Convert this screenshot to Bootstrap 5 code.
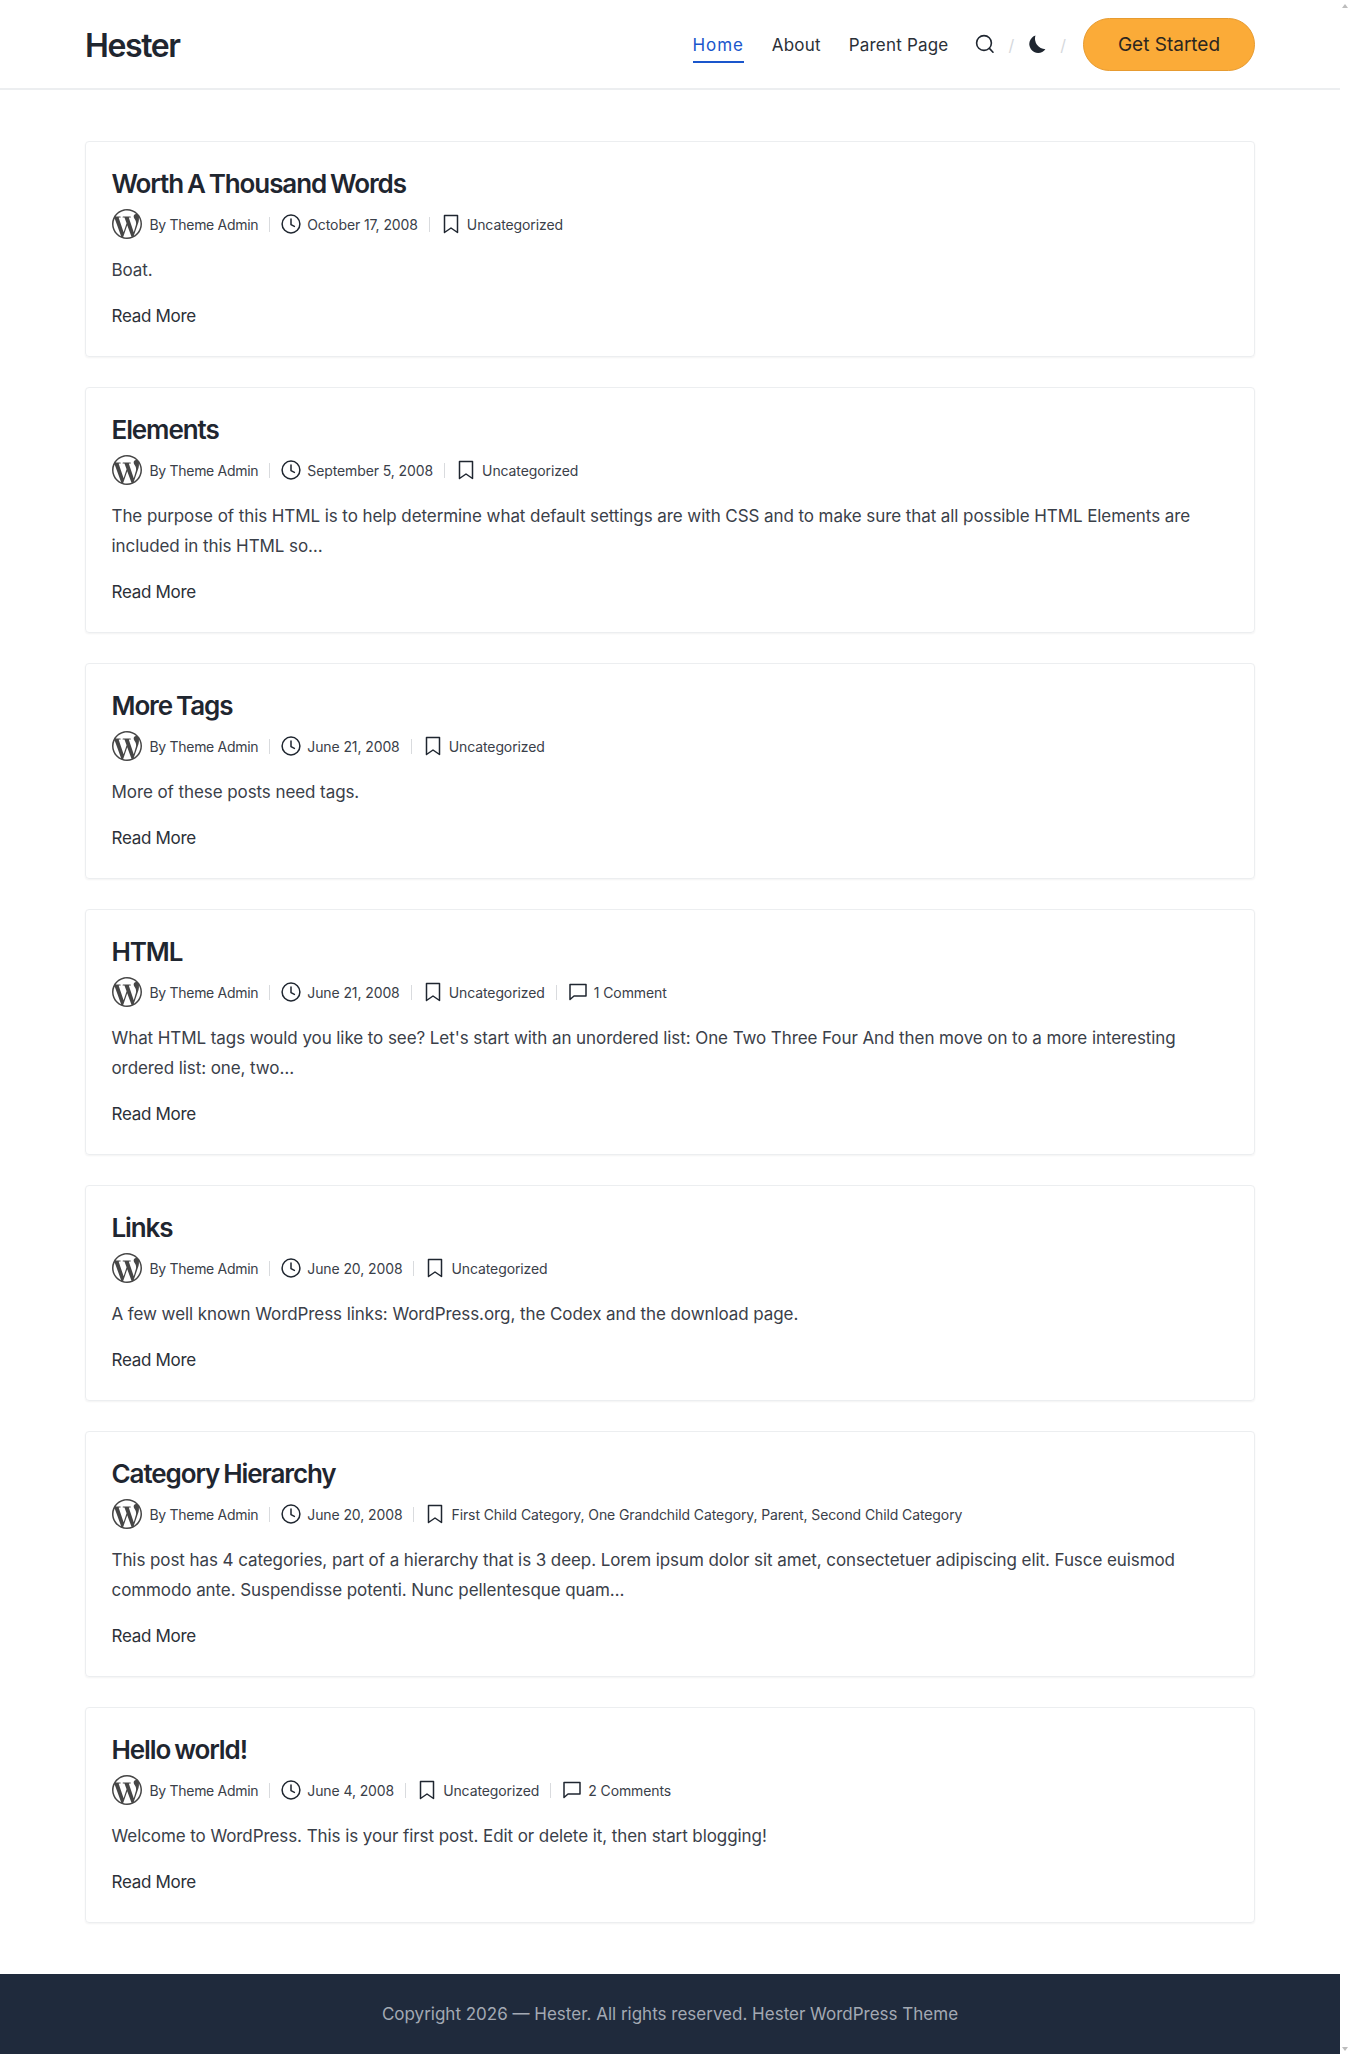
<!DOCTYPE html>
<html lang="en">
<head>
  <meta charset="UTF-8">
  <title>Hester</title>
  <meta name="viewport" content="width=device-width, initial-scale=1">
  <link href="https://cdn.jsdelivr.net/npm/bootstrap@5.3.3/dist/css/bootstrap.min.css" rel="stylesheet">
  <style>
    body { margin-right: 10px; font-family: Inter, "Liberation Sans", sans-serif; font-size: 16px; color: #3a4049; background: #fff; }
    .site-head { height: 90px; padding: 0 85px; border-bottom: 2px solid #eceef0; }
    .site-logo { font-size: 32px; font-weight: 600; letter-spacing: -1.4px; color: #1f2630; text-decoration: none; margin-top: 3px; }
    .head-link { font-size: 17px; letter-spacing: .2px; color: #2b3038; text-decoration: none; padding: 4px 0 3px; border-bottom: 2px solid transparent; margin-top: 4px; }
    .head-link.is-on { color: #1a56cc; border-bottom-color: #1a56cc; letter-spacing: .9px; }
    .head-nav { gap: 28px; }
    .head-tools { gap: 13px; margin-left: 27px; margin-right: 17px; color: #d5d8dc; }
    .head-tools span { margin-top: 1px; }
    .start-btn { width: 172px; height: 53px; padding-top: 2px; font-size: 19px; color: #2b2620; background: #fbab38; border: 1px solid #e79b30; border-radius: 27px; display: flex; align-items: center; justify-content: center; text-decoration: none; }
    .post-list { padding: 51px 85px 51px; gap: 30px; }
    .post-box { padding: 25px 26px 25px 25.5px; border: 1px solid #eceef0; border-radius: 4px; box-shadow: 0 1px 2px rgba(0,0,0,.05); }
    .post-title { font-size: 26px; font-weight: 600; line-height: 30px; letter-spacing: -1.1px; word-spacing: -1.5px; color: #1f2630; margin: 2px 0 10px; }
    .post-meta { font-size: 14px; letter-spacing: -.1px; height: 30px; color: #3a4049; }
    .meta-bit { display: flex; align-items: center; }
    .meta-bit + .meta-bit::before { content: ""; width: 1px; height: 15px; background: #d9dbde; margin: 0 11px; }
    .meta-bit svg { margin-right: 6px; flex: none; }
    .meta-bit .wp-mark { margin-right: 8px; }
    .meta-by { letter-spacing: -.3px; }
    .post-text { font-size: 17px; line-height: 30px; margin: 16px 0 16px; letter-spacing: -.08px; }
    .read-link { display: block; font-size: 17px; line-height: 30px; color: #2b3038; text-decoration: none; letter-spacing: -.3px; }
    .site-foot { height: 81px; background: #1f2a3c; color: #a3a9b3; font-size: 17px; }
    .bar-arrow { right: 2px; width: 0; height: 0; border-left: 3px solid transparent; border-right: 3px solid transparent; }
    .bar-up { top: 4px; border-bottom: 4px solid #bdbdbd; }
    .bar-down { bottom: 3px; border-top: 4px solid #bdbdbd; }
  </style>
</head>
<body>
  <svg width="0" height="0" class="position-absolute">
    <symbol id="i-wp" viewBox="0 0 24 24"><path fill="#464646" d="M21.469 6.825c.84 1.537 1.318 3.3 1.318 5.175 0 3.979-2.156 7.456-5.363 9.325l3.295-9.527c.615-1.54.82-2.771.82-3.864 0-.405-.026-.78-.07-1.11m-7.981.105c.647-.03 1.232-.105 1.232-.105.582-.075.514-.93-.067-.899 0 0-1.755.135-2.88.135-1.064 0-2.85-.15-2.85-.15-.585-.03-.661.855-.075.885 0 0 .54.061 1.125.09l1.68 4.605-2.37 7.08L5.354 6.9c.649-.03 1.234-.1 1.234-.1.585-.075.516-.93-.065-.896 0 0-1.746.138-2.874.138-.2 0-.438-.008-.69-.015C4.911 3.15 8.235 1.215 12 1.215c2.809 0 5.365 1.072 7.286 2.833-.046-.003-.091-.009-.141-.009-1.06 0-1.812.923-1.812 1.914 0 .89.513 1.643 1.06 2.531.411.72.89 1.643.89 2.977 0 .915-.354 1.994-.821 3.479l-1.075 3.585-3.9-11.61.001.014zM12 22.784c-1.059 0-2.081-.153-3.048-.437l3.237-9.406 3.315 9.087c.024.053.05.101.078.149-1.12.393-2.325.609-3.582.609M1.211 12c0-1.564.336-3.05.935-4.39L7.29 21.709C3.694 19.96 1.212 16.271 1.211 12M12 0C5.385 0 0 5.385 0 12s5.385 12 12 12 12-5.385 12-12S18.615 0 12 0"/></symbol>
    <symbol id="i-clock" viewBox="0 0 20 20"><g fill="none" stroke="#1f2630" stroke-width="1.5" stroke-linecap="round" stroke-linejoin="round"><circle cx="10" cy="10" r="8.9"/><path d="M10 5V10.6L13.4 12.4"/></g></symbol>
    <symbol id="i-mark" viewBox="0 0 20 20"><path fill="none" stroke="#1f2630" stroke-width="1.5" stroke-linejoin="round" d="M3.5 1.5H16.5V18.5L10 14L3.5 18.5Z"/></symbol>
    <symbol id="i-talk" viewBox="0 0 20 20"><path fill="none" stroke="#1f2630" stroke-width="1.5" stroke-linejoin="round" d="M2 2.5H18V14H6L2 17.5Z"/></symbol>
  </svg>
  <span class="position-fixed bar-arrow bar-up"></span>
  <span class="position-fixed bar-arrow bar-down"></span>

  <nav class="navbar site-head flex-nowrap">
    <a class="site-logo" href="#">Hester</a>
    <div class="d-flex align-items-center">
      <div class="d-flex align-items-center head-nav">
        <a class="head-link is-on" href="#">Home</a>
        <a class="head-link" href="#">About</a>
        <a class="head-link" href="#">Parent Page</a>
      </div>
      <div class="d-flex align-items-center head-tools">
        <svg width="20" height="20" viewBox="0 0 20 20"><g fill="none" stroke="#1f2630" stroke-width="1.6" stroke-linecap="round"><circle cx="9" cy="9" r="7.4"/><path d="M14.4 14.4L18 18.2"/></g></svg>
        <span>/</span>
        <svg width="20" height="20" viewBox="0 0 20 20"><path fill="#1f2630" d="M8.5 1.5A8.9 8.9 0 1 0 18.4 15.2A10.5 10.5 0 0 1 8.5 1.5Z"/></svg>
        <span>/</span>
      </div>
      <a class="start-btn" href="#">Get Started</a>
    </div>
  </nav>

  <main class="d-flex flex-column post-list">
    <article class="post-box">
      <h2 class="post-title">Worth A Thousand Words</h2>
      <div class="d-flex align-items-center post-meta">
        <span class="meta-bit meta-by"><svg class="wp-mark" width="30" height="30"><use href="#i-wp"/></svg>By Theme Admin</span>
        <span class="meta-bit"><svg width="20" height="20"><use href="#i-clock"/></svg>October 17, 2008</span>
        <span class="meta-bit"><svg width="20" height="20"><use href="#i-mark"/></svg>Uncategorized</span>
      </div>
      <p class="post-text">Boat.</p>
      <a class="read-link" href="#">Read More</a>
    </article>
    <article class="post-box">
      <h2 class="post-title">Elements</h2>
      <div class="d-flex align-items-center post-meta">
        <span class="meta-bit meta-by"><svg class="wp-mark" width="30" height="30"><use href="#i-wp"/></svg>By Theme Admin</span>
        <span class="meta-bit"><svg width="20" height="20"><use href="#i-clock"/></svg>September 5, 2008</span>
        <span class="meta-bit"><svg width="20" height="20"><use href="#i-mark"/></svg>Uncategorized</span>
      </div>
      <p class="post-text">The purpose of this HTML is to help determine what default settings are with CSS and to make sure that all possible HTML Elements are included in this HTML so…</p>
      <a class="read-link" href="#">Read More</a>
    </article>
    <article class="post-box">
      <h2 class="post-title">More Tags</h2>
      <div class="d-flex align-items-center post-meta">
        <span class="meta-bit meta-by"><svg class="wp-mark" width="30" height="30"><use href="#i-wp"/></svg>By Theme Admin</span>
        <span class="meta-bit"><svg width="20" height="20"><use href="#i-clock"/></svg>June 21, 2008</span>
        <span class="meta-bit"><svg width="20" height="20"><use href="#i-mark"/></svg>Uncategorized</span>
      </div>
      <p class="post-text">More of these posts need tags.</p>
      <a class="read-link" href="#">Read More</a>
    </article>
    <article class="post-box">
      <h2 class="post-title">HTML</h2>
      <div class="d-flex align-items-center post-meta">
        <span class="meta-bit meta-by"><svg class="wp-mark" width="30" height="30"><use href="#i-wp"/></svg>By Theme Admin</span>
        <span class="meta-bit"><svg width="20" height="20"><use href="#i-clock"/></svg>June 21, 2008</span>
        <span class="meta-bit"><svg width="20" height="20"><use href="#i-mark"/></svg>Uncategorized</span>
        <span class="meta-bit"><svg width="20" height="20"><use href="#i-talk"/></svg>1 Comment</span>
      </div>
      <p class="post-text">What HTML tags would you like to see? Let's start with an unordered list: One Two Three Four And then move on to a more interesting ordered list: one, two…</p>
      <a class="read-link" href="#">Read More</a>
    </article>
    <article class="post-box">
      <h2 class="post-title">Links</h2>
      <div class="d-flex align-items-center post-meta">
        <span class="meta-bit meta-by"><svg class="wp-mark" width="30" height="30"><use href="#i-wp"/></svg>By Theme Admin</span>
        <span class="meta-bit"><svg width="20" height="20"><use href="#i-clock"/></svg>June 20, 2008</span>
        <span class="meta-bit"><svg width="20" height="20"><use href="#i-mark"/></svg>Uncategorized</span>
      </div>
      <p class="post-text">A few well known WordPress links: WordPress.org, the Codex and the download page.</p>
      <a class="read-link" href="#">Read More</a>
    </article>
    <article class="post-box">
      <h2 class="post-title">Category Hierarchy</h2>
      <div class="d-flex align-items-center post-meta">
        <span class="meta-bit meta-by"><svg class="wp-mark" width="30" height="30"><use href="#i-wp"/></svg>By Theme Admin</span>
        <span class="meta-bit"><svg width="20" height="20"><use href="#i-clock"/></svg>June 20, 2008</span>
        <span class="meta-bit"><svg width="20" height="20"><use href="#i-mark"/></svg>First Child Category, One Grandchild Category, Parent, Second Child Category</span>
      </div>
      <p class="post-text">This post has 4 categories, part of a hierarchy that is 3 deep. Lorem ipsum dolor sit amet, consectetuer adipiscing elit. Fusce euismod commodo ante. Suspendisse potenti. Nunc pellentesque quam…</p>
      <a class="read-link" href="#">Read More</a>
    </article>
    <article class="post-box">
      <h2 class="post-title">Hello world!</h2>
      <div class="d-flex align-items-center post-meta">
        <span class="meta-bit meta-by"><svg class="wp-mark" width="30" height="30"><use href="#i-wp"/></svg>By Theme Admin</span>
        <span class="meta-bit"><svg width="20" height="20"><use href="#i-clock"/></svg>June 4, 2008</span>
        <span class="meta-bit"><svg width="20" height="20"><use href="#i-mark"/></svg>Uncategorized</span>
        <span class="meta-bit"><svg width="20" height="20"><use href="#i-talk"/></svg>2 Comments</span>
      </div>
      <p class="post-text">Welcome to WordPress. This is your first post. Edit or delete it, then start blogging!</p>
      <a class="read-link" href="#">Read More</a>
    </article>
  </main>

  <footer class="d-flex align-items-center justify-content-center site-foot">
    Copyright 2026 — Hester. All rights reserved. Hester WordPress Theme
  </footer>

  <script src="https://cdn.jsdelivr.net/npm/bootstrap@5.3.3/dist/js/bootstrap.bundle.min.js"></script>
</body>
</html>
